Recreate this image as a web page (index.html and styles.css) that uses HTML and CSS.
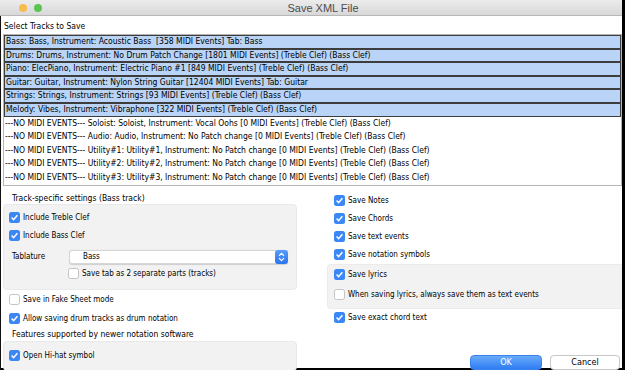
FILE: index.html
```html
<!DOCTYPE html>
<html lang="en">
<head>
  <meta charset="UTF-8">
  <title>Save XML File</title>
  <link rel="stylesheet" href="styles.css">
</head>
<body>
  <div class="window">
    <div class="titlebar">
      <div class="lights">
        <span class="light light-yellow"></span>
        <span class="light light-green"></span>
      </div>
      <div class="title">Save XML File</div>
    </div>

    <div class="dialog">
      <div class="caption">Select Tracks to Save</div>
      <div class="track-list">
        <div class="track selected">Bass: Bass, Instrument: Acoustic Bass&nbsp; [358 MIDI Events] Tab: Bass</div>
        <div class="track selected">Drums: Drums, Instrument: No Drum Patch Change [1801 MIDI Events] (Treble Clef) (Bass Clef)</div>
        <div class="track selected">Piano: ElecPiano, Instrument: Electric Piano #1 [849 MIDI Events] (Treble Clef) (Bass Clef)</div>
        <div class="track selected">Guitar: Guitar, Instrument: Nylon String Guitar [12404 MIDI Events] Tab: Guitar</div>
        <div class="track selected">Strings: Strings, Instrument: Strings [93 MIDI Events] (Treble Clef) (Bass Clef)</div>
        <div class="track selected">Melody: Vibes, Instrument: Vibraphone [322 MIDI Events] (Treble Clef) (Bass Clef)</div>
        <div class="track">---NO MIDI EVENTS--- Soloist: Soloist, Instrument: Vocal Oohs [0 MIDI Events] (Treble Clef) (Bass Clef)</div>
        <div class="track">---NO MIDI EVENTS--- Audio: Audio, Instrument: No Patch change [0 MIDI Events] (Treble Clef) (Bass Clef)</div>
        <div class="track">---NO MIDI EVENTS--- Utility#1: Utility#1, Instrument: No Patch change [0 MIDI Events] (Treble Clef) (Bass Clef)</div>
        <div class="track">---NO MIDI EVENTS--- Utility#2: Utility#2, Instrument: No Patch change [0 MIDI Events] (Treble Clef) (Bass Clef)</div>
        <div class="track">---NO MIDI EVENTS--- Utility#3: Utility#3, Instrument: No Patch change [0 MIDI Events] (Treble Clef) (Bass Clef)</div>
      </div>

      <div class="settings">
        <div class="col-left">
          <div class="group-label">Track-specific settings (Bass track)</div>
          <div class="group-box track-box">
            <div class="option"><span class="check"></span>Include Treble Clef</div>
            <div class="option"><span class="check"></span>Include Bass Clef</div>
            <div class="tab-row">
              <span class="tab-label">Tablature</span>
              <div class="popup">
                <span>Bass</span>
                <span class="stepper">
                  <svg width="7" height="10" viewBox="0 0 7 10"><path d="M1 3.8 L3.5 1.3 L6 3.8 M1 6.2 L3.5 8.7 L6 6.2" fill="none" stroke="#fff" stroke-width="1.2"/></svg>
                </span>
              </div>
            </div>
            <div class="option sub-option"><span class="check off"></span>Save tab as 2 separate parts (tracks)</div>
          </div>
          <div class="option loose"><span class="check off"></span>Save in Fake Sheet mode</div>
          <div class="option loose"><span class="check"></span>Allow saving drum tracks as drum notation</div>
          <div class="group-label features">Features supported by newer notation software</div>
          <div class="group-box hihat-box">
            <div class="option"><span class="check"></span>Open Hi-hat symbol</div>
          </div>
        </div>

        <div class="col-right">
          <div class="option"><span class="check"></span>Save Notes</div>
          <div class="option"><span class="check"></span>Save Chords</div>
          <div class="option"><span class="check"></span>Save text events</div>
          <div class="option"><span class="check"></span>Save notation symbols</div>
          <div class="lyrics-box">
            <div class="option"><span class="check"></span>Save lyrics</div>
            <div class="option"><span class="check off"></span>When saving lyrics, always save them as text events</div>
          </div>
          <div class="option"><span class="check"></span>Save exact chord text</div>
          <div class="buttons">
            <button class="btn btn-ok">OK</button>
            <button class="btn btn-cancel">Cancel</button>
          </div>
        </div>
      </div>
    </div>
  </div>
</body>
</html>
```

FILE: styles.css
```css
body {
  margin: 0;
  width: 625px;
  height: 370px;
  overflow: hidden;
  background-color: #fff;
  font-family: "DejaVu Sans Condensed", "DejaVu Sans", sans-serif;
  font-size: 8.5px;
  color: #000;
}

.window {
  width: 625px;
  height: 370px;
  box-sizing: border-box;
  border-right: 3px solid #000;
  border-bottom: 2px solid #000;
  display: flex;
  flex-direction: column;
}

.titlebar {
  height: 15px;
  flex: none;
  display: flex;
  align-items: center;
  padding-left: 19px;
  background: linear-gradient(#ececec, #d8d8d8);
  border-bottom: 1px solid #b8b8b8;
}

.lights {
  display: flex;
  gap: 7px;
}

.light {
  width: 8px;
  height: 8px;
  border-radius: 50%;
}

.light-yellow {
  background-color: #f6bd4c;
}

.light-green {
  background-color: #5cc54f;
}

.title {
  flex: 1;
  text-align: center;
  padding-right: 18px;
  font-family: "Liberation Sans", sans-serif;
  font-size: 11px;
  color: #4c4c4c;
}

.dialog {
  flex: 1;
  display: flex;
  flex-direction: column;
  padding-left: 2px;
  border-left: 1px solid #111;
}

.caption {
  padding: 4px 0 0 1px;
  line-height: 12px;
  margin-bottom: 2px;
}

.track-list {
  border: 1px solid #b4b4b4;
  background-color: #fff;
}

.track {
  height: 13.6px;
  line-height: 13.6px;
  box-sizing: border-box;
  padding-left: 1px;
  white-space: nowrap;
  overflow: hidden;
}

.track.selected {
  background-color: #b9d4f6;
  border: 1px solid #3d3d3d;
  line-height: 11.6px;
}

.settings {
  flex: 1;
  display: grid;
  grid-template-columns: 294px 1fr;
  column-gap: 30px;
}

.col-left, .col-right {
  display: flex;
  flex-direction: column;
}

.group-label {
  margin-top: 7px;
  padding-left: 9px;
  line-height: 11px;
}

.group-box {
  box-sizing: border-box;
  background-color: #f2f2f2;
  border: 1px solid #e9e9e9;
  border-radius: 4px;
  padding-left: 5px;
}

.track-box {
  height: 86px;
  padding-top: 4px;
}

.option {
  display: flex;
  align-items: center;
  height: 18px;
  font-size: 8px;
  white-space: nowrap;
}

.check {
  width: 11px;
  height: 11px;
  box-sizing: border-box;
  border-radius: 2.5px;
  margin-right: 3px;
  flex: none;
  background: #3b87f5 url("data:image/svg+xml;utf8,<svg xmlns='http://www.w3.org/2000/svg' width='11' height='11'><path d='M2.6 5.6 L4.6 7.7 L8.4 3.2' fill='none' stroke='white' stroke-width='1.5'/></svg>") no-repeat center;
}

.check.off {
  background: #fff;
  border: 1px solid #c4c4c4;
}

.tab-row {
  display: flex;
  align-items: center;
  margin-top: 5px;
  height: 14px;
}

.tab-label {
  width: 57px;
  padding-left: 3px;
  font-size: 8px;
}

.popup {
  width: 219px;
  height: 14px;
  box-sizing: border-box;
  display: flex;
  align-items: center;
  justify-content: space-between;
  padding-left: 13px;
  font-size: 8px;
  background-color: #fff;
  border: 1px solid #d6d6d6;
  border-radius: 3px;
  box-shadow: 0 0.5px 1px rgba(0,0,0,0.15);
}

.stepper {
  width: 13px;
  height: 14px;
  margin-right: -1px;
  border-radius: 3px;
  background: linear-gradient(#5a9cf8, #2a74ef);
  display: flex;
  align-items: center;
  justify-content: center;
}

.sub-option {
  padding-left: 59px;
  margin-top: 2px;
  height: 15px;
}

.option.loose {
  padding-left: 6px;
  height: 19px;
}

.group-label.features {
  margin-top: 0;
  line-height: 12px;
  margin-bottom: 1px;
}

.hihat-box {
  height: 30px;
  padding-top: 5px;
}

.col-right {
  padding-top: 6px;
}

.col-right > .option {
  padding-left: 7px;
}

.lyrics-box {
  background-color: #f2f2f2;
  border: 1px solid #ebebeb;
  border-right: none;
  border-radius: 4px 0 0 4px;
  padding: 1px 0 4px 6px;
  display: flex;
  flex-direction: column;
  gap: 2px;
}

.buttons {
  margin-top: auto;
  margin-bottom: 1px;
  display: flex;
  justify-content: flex-end;
  gap: 8px;
  padding-right: 2px;
}

.btn {
  height: 15px;
  padding: 0;
  font-family: inherit;
  font-size: 9px;
  border-radius: 4px;
}

.btn-ok {
  width: 72px;
  color: #fff;
  border: 1px solid #3a80ef;
  background: linear-gradient(#68abfa, #2f7cf3);
}

.btn-cancel {
  width: 70px;
  color: #000;
  border: 1px solid #c9c9c9;
  background-color: #fff;
  box-shadow: 0 0.5px 1px rgba(0,0,0,0.1);
}
```
